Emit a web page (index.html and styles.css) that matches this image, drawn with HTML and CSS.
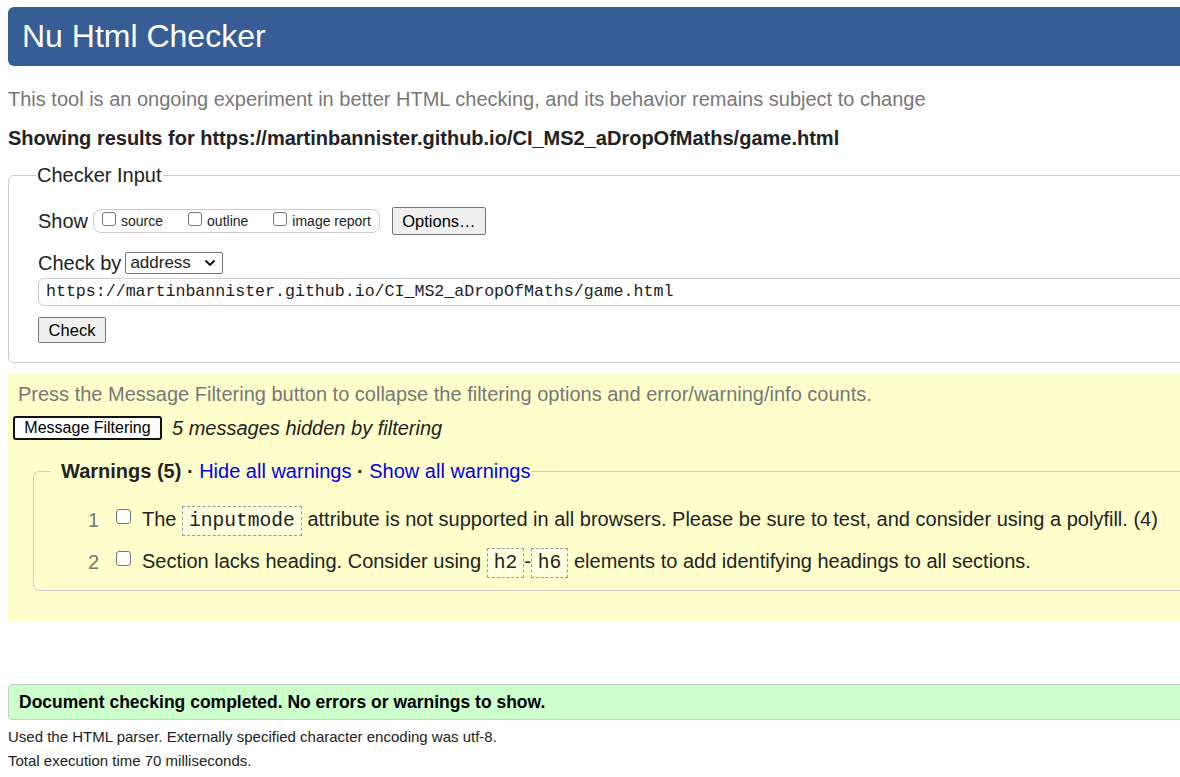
FILE: index.html
```html
<!DOCTYPE html>
<html lang="en">
<head>
<meta charset="utf-8">
<title>Nu Html Checker</title>
<link rel="stylesheet" href="styles.css">
</head>
<body>
<div class="page">
  <h1 class="masthead">Nu Html Checker</h1>
  <p class="intro">This tool is an ongoing experiment in better HTML checking, and its behavior remains subject to change</p>
  <p class="showing">Showing results for https://martinbannister.github.io/CI_MS2_aDropOfMaths/game.html</p>

  <fieldset class="input-box">
    <legend>Checker Input</legend>
    <div class="row show-row">
      <span class="lbl">Show</span>
      <span class="checks">
        <label><span class="cb"></span>source</label>
        <label><span class="cb"></span>outline</label>
        <label><span class="cb"></span>image report</label>
      </span>
      <button class="btn options">Options…</button>
    </div>
    <div class="row checkby-row">
      <span class="lbl">Check by</span>
      <span class="select">address<svg width="12" height="8" viewBox="0 0 12 8"><path d="M1.5 1.5 L6 6 L10.5 1.5" fill="none" stroke="#000" stroke-width="1.8"/></svg></span>
    </div>
    <div class="url">https://martinbannister.github.io/CI_MS2_aDropOfMaths/game.html</div>
    <button class="btn check">Check</button>
  </fieldset>

  <section class="filters">
    <p class="press">Press the Message Filtering button to collapse the filtering options and error/warning/info counts.</p>
    <div class="filter-row">
      <button class="mf">Message Filtering</button>
      <em>5 messages hidden by filtering</em>
    </div>
    <fieldset class="warnings">
      <legend><strong>Warnings (5) ·</strong> <a href="#">Hide all warnings</a> <strong>·</strong> <a href="#">Show all warnings</a></legend>
      <ol>
        <li><span class="num">1</span><span class="cb"></span><span>The <code>inputmode</code> attribute is not supported in all browsers. Please be sure to test, and consider using a polyfill. (4)</span></li>
        <li><span class="num">2</span><span class="cb"></span><span>Section lacks heading. Consider using <code>h2</code>-<code>h6</code> elements to add identifying headings to all sections.</span></li>
      </ol>
    </fieldset>
  </section>

  <p class="success">Document checking completed. No errors or warnings to show.</p>
  <p class="details first">Used the HTML parser. Externally specified character encoding was utf-8.</p>
  <p class="details">Total execution time 70 milliseconds.</p>
</div>
</body>
</html>
```

FILE: styles.css
```css
html, body {
  overflow: hidden;
}
body {
  margin: 7px 0 0 8px;
  font-family: "Liberation Sans", Arial, sans-serif;
  color: #222;
  background: #fff;
}
.page {
  width: 1260px;
}
.masthead {
  margin: 0;
  height: 59px;
  line-height: 59px;
  padding-left: 14px;
  background: #365d95;
  color: #fff;
  font-size: 32px;
  font-weight: normal;
  border-radius: 6px;
}
.intro {
  margin: 20px 0 0;
  font-size: 20px;
  line-height: 26px;
  color: #777;
}
.showing {
  margin: 13px 0 0;
  font-size: 20px;
  line-height: 26px;
  font-weight: bold;
  color: #222;
}
.input-box {
  margin: 13px 0 0;
  padding: 19px 0 19px 29px;
  border: 1px solid #ccc;
  border-radius: 6px;
}
.input-box legend {
  padding: 0 1px;
  margin-left: -2px;
  font-size: 20px;
  color: #222;
}
.row {
  display: flex;
  align-items: center;
}
.lbl {
  font-size: 20px;
}
.show-row {
  height: 30px;
}
.checks {
  margin-left: 5px;
  display: flex;
  align-items: center;
  height: 22px;
  padding: 0 8px 0 8px;
  border: 1px solid #ccc;
  border-radius: 8px;
  font-size: 14px;
  gap: 25px;
}
.checks label {
  display: flex;
  align-items: flex-end;
}
.checks .cb {
  margin-right: 5px;
  position: relative;
  top: -3px;
  width: 14px;
  height: 14px;
}
.cb {
  display: inline-block;
  width: 13px;
  height: 13px;
  border: 1px solid #767676;
  border-radius: 3px;
  background: #fff;
  box-sizing: border-box;
  flex: none;
}
.btn {
  font-family: "Liberation Sans", Arial, sans-serif;
  font-size: 16.5px;
  background: #efefef;
  border: 1px solid #767676;
  border-radius: 2px;
  color: #000;
  padding: 0;
}
.options {
  margin-left: 12px;
  width: 94px;
  height: 28px;
}
.checkby-row {
  margin-top: 15px;
  height: 24px;
}
.select {
  margin-left: 4px;
  width: 98px;
  height: 22px;
  box-sizing: border-box;
  border: 1px solid #767676;
  border-radius: 2px;
  font-size: 17px;
  display: flex;
  align-items: center;
  justify-content: space-between;
  padding: 0 6px 0 4px;
}
.url {
  margin-top: 3px;
  height: 28px;
  box-sizing: border-box;
  border: 1px solid #ccc;
  border-radius: 6px;
  font-family: "Liberation Mono", "Courier New", monospace;
  font-size: 16.6px;
  line-height: 26px;
  padding-left: 7px;
}
.check {
  margin-top: 11px;
  width: 68px;
  height: 26px;
  display: block;
}
.filters {
  margin-top: 11px;
  background: #ffffcc;
  padding: 7px 0 30px 0;
}
.press {
  margin: 0 0 0 10px;
  font-size: 20px;
  line-height: 26px;
  color: #777;
}
.filter-row {
  margin-top: 9px;
  display: flex;
  align-items: center;
  padding-left: 5px;
  font-size: 20px;
}
.mf {
  font-family: "Liberation Sans", Arial, sans-serif;
  font-size: 16px;
  background: #fff;
  color: #000;
  border: 2px solid #111;
  border-radius: 3px;
  height: 24px;
  width: 149px;
  padding: 0;
  margin-right: 10px;
}
.filter-row em {
  color: #222;
}
.warnings {
  margin: 20px 0 0 25px;
  padding: 16px 0 7px 0;
  border: 1px solid #ccc;
  border-radius: 6px;
}
.warnings legend {
  margin-left: 17px;
  padding: 0 1px 0 10px;
  font-size: 20px;
  color: #222;
}
.warnings a {
  color: #0000ee;
  text-decoration: none;
}
.warnings ol {
  margin: 0;
  padding: 0;
  list-style: none;
}
.warnings li {
  display: flex;
  align-items: center;
  font-size: 20px;
  line-height: 26px;
  height: 42px;
}
.warnings .num {
  width: 65px;
  text-align: right;
  color: #777;
  margin-right: 17px;
}
.warnings li .cb {
  margin-right: 11px;
  position: relative;
  top: -4px;
  width: 15px;
  height: 15px;
}
code {
  font-family: "Liberation Mono", "Courier New", monospace;
  font-size: 19.6px;
  border: 1px dashed #999;
  background: #ffffe0;
  padding: 3px 6px;
}
.success {
  margin: 63px 0 0;
  height: 36px;
  box-sizing: border-box;
  line-height: 34px;
  background: #ccffcc;
  border: 1px solid #ccc;
  border-radius: 4px;
  padding-left: 10px;
  font-weight: bold;
  font-size: 17.5px;
  color: #000;
}
.details {
  margin: 7px 0 0;
  font-size: 15px;
  line-height: 17px;
  color: #222;
}
.details.first {
  margin-top: 8px;
}
```
